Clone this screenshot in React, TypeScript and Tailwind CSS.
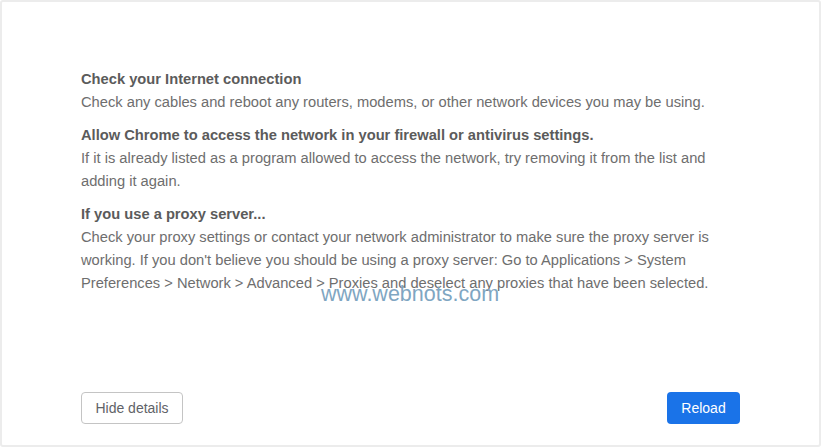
import React from "react";

export default function App() {
  return (
    <div className="w-[821px] h-[447px] bg-white" style={{ fontFamily: '"Liberation Sans", Arial, sans-serif' }}>
      <div className="relative w-full h-full border-2 border-[#ececec] rounded-[3px] bg-white flex flex-col">
        <div className="flex-1 pl-[79px] pr-[60px] pt-[66px] text-[14.7px] leading-[23px] text-[#6e6e6e]">
          <div className="font-bold text-[#5b5b5b]">Check your Internet connection</div>
          <div>Check any cables and reboot any routers, modems, or other network devices you may be using.</div>
          <div className="mt-[10px] font-bold text-[#5b5b5b]">Allow Chrome to access the network in your firewall or antivirus settings.</div>
          <div className="w-[650px]">If it is already listed as a program allowed to access the network, try removing it from the list and adding it again.</div>
          <div className="mt-[10px] font-bold text-[#5b5b5b]">If you use a proxy server...</div>
          <div className="w-[650px]">Check your proxy settings or contact your network administrator to make sure the proxy server is working. If you don't believe you should be using a proxy server: Go to Applications &gt; System Preferences &gt; Network &gt; Advanced &gt; Proxies and deselect any proxies that have been selected.</div>
        </div>
        <div className="flex justify-between items-center pl-[79px] pr-[79px] pb-[21px]">
          <button className="h-[32px] w-[102px] rounded-[4px] border border-[#c4c4c4] bg-white text-[14px] text-[#5f6368]">Hide details</button>
          <button className="h-[32px] w-[73px] rounded-[4px] bg-[#1a73e8] text-[14px] text-white">Reload</button>
        </div>
        <div className="absolute left-[319px] top-[280px] text-[21.5px] leading-[24px] text-[#7fa6c2]">www.webnots.com</div>
      </div>
    </div>
  );
}
